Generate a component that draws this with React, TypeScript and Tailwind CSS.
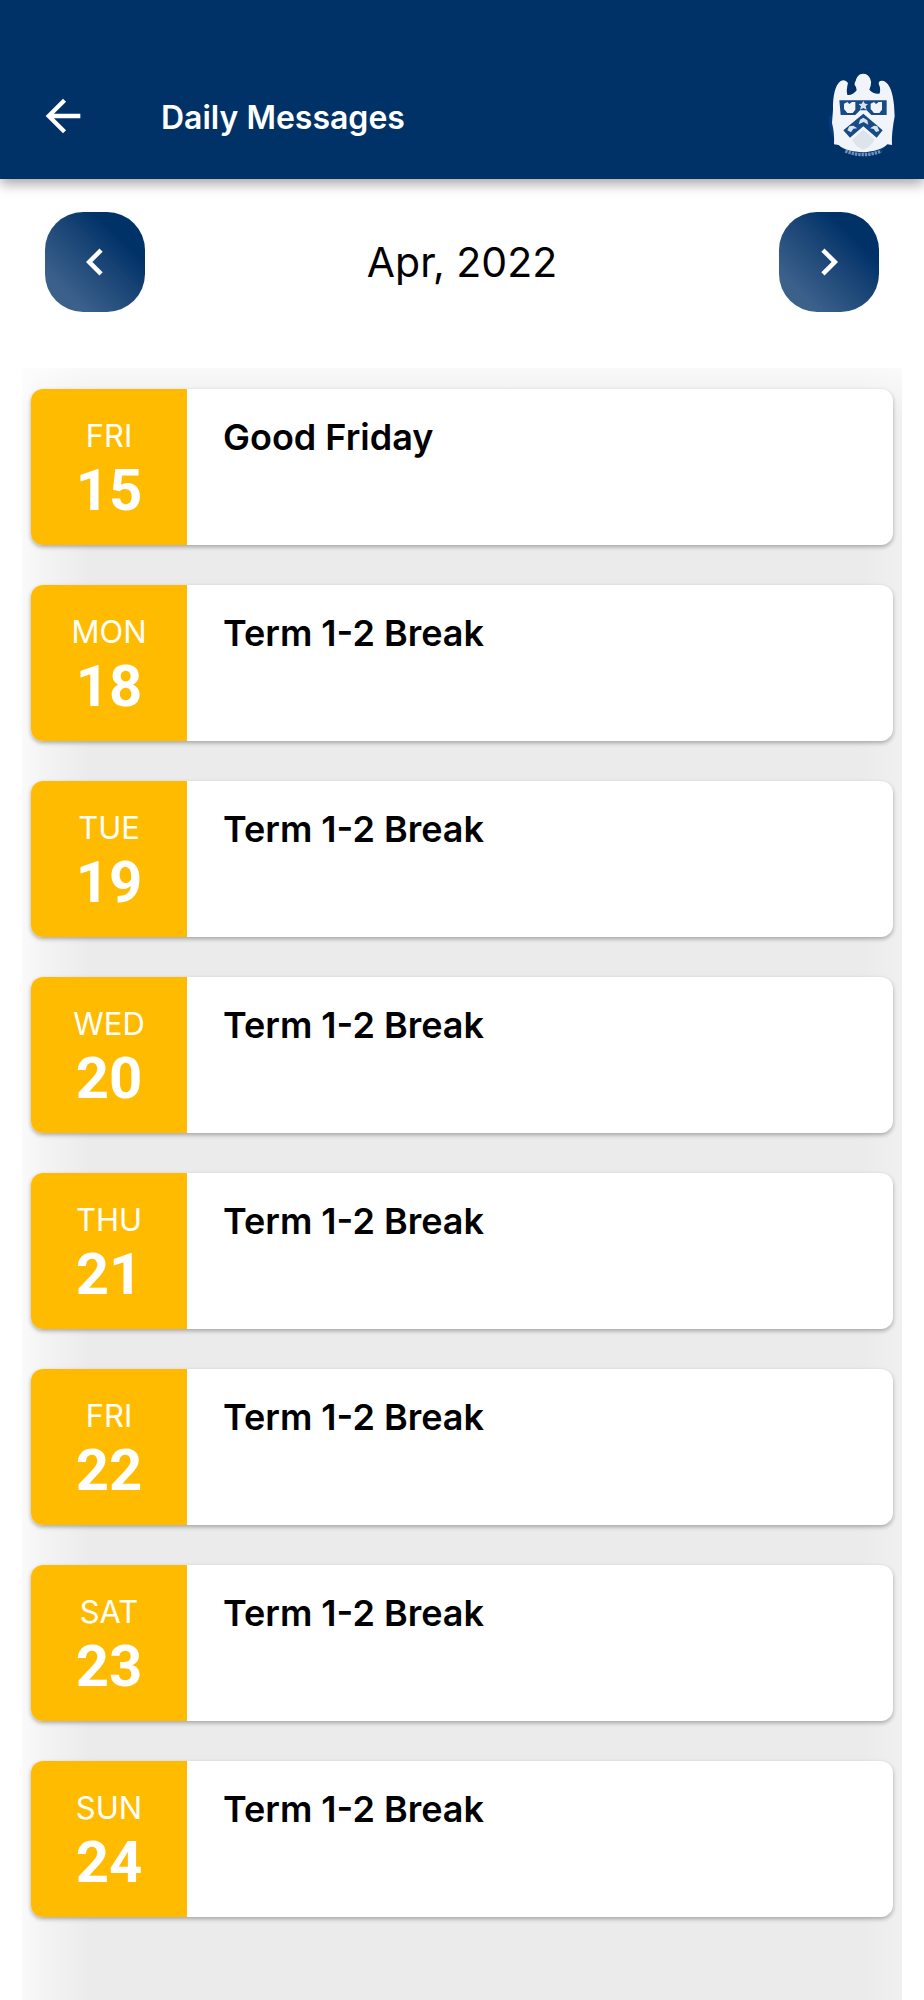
import { MdArrowBack, MdChevronLeft, MdChevronRight } from "react-icons/md";

interface Message {
  weekday: string;
  day: number;
  title: string;
}

const messages: Message[] = [
  { weekday: "FRI", day: 15, title: "Good Friday" },
  { weekday: "MON", day: 18, title: "Term 1-2 Break" },
  { weekday: "TUE", day: 19, title: "Term 1-2 Break" },
  { weekday: "WED", day: 20, title: "Term 1-2 Break" },
  { weekday: "THU", day: 21, title: "Term 1-2 Break" },
  { weekday: "FRI", day: 22, title: "Term 1-2 Break" },
  { weekday: "SAT", day: 23, title: "Term 1-2 Break" },
  { weekday: "SUN", day: 24, title: "Term 1-2 Break" },
];

const Crest = () => (
  <svg
    viewBox="0 0 204 258"
    className="h-[86px] w-[68px] shrink-0"
    role="img"
    aria-label="School crest"
  >
    {/* Motto ring */}
    <path d="M4 128 C-4 180 30 246 108 249 C176 246 206 190 196 128 Z" fill="#063b7d" />
    <path d="M52 234 Q106 256 160 234" fill="none" stroke="#6f93bd" strokeWidth="10" strokeDasharray="7 3" />
    {/* Eagle */}
    <path
      d="M106 2 C92 2 86 12 83 24 Q76 34 84 42 L86 52 Q74 68 58 66 Q54 52 60 30 Q52 18 38 24 C22 34 14 70 15 110 L12 150 Q20 180 18 214 L32 216 C46 230 74 236 106 238 C138 236 164 228 178 214 L192 216 Q190 180 200 130 L198 96 C194 58 186 34 168 24 Q152 20 152 32 Q160 50 154 62 Q136 64 124 50 L128 38 Q132 28 126 16 Q120 2 106 2 Z"
      fill="#f1f5f9"
    />
    {/* Shield */}
    <path d="M34 82 H176 V126 H130 L116 112 H96 L82 126 H38 Z" fill="#174b87" />
    <path d="M48 92 L58 87 L64 93 L72 87 H82 V110 L74 120 H58 L48 108 Z" fill="#f1f5f9" />
    <path d="M128 92 L138 87 L144 93 L152 87 H162 V110 L154 120 H138 L128 108 Z" fill="#f1f5f9" />
    <path d="M106 84 L111 92 L120 93 L113 100 L116 110 L106 105 L96 110 L99 100 L92 93 L101 92 Z" fill="#d8e2ed" />
    <path d="M106 122 L164 172 L146 194 L106 160 L66 194 L46 172 Z" fill="#174b87" />
    <path d="M92 154 L96 140 L106 134 L118 142 L121 155 L107 147 Z" fill="#d8e2ed" />
    <path d="M58 172 L64 160 L76 158 L88 166 L76 167 L69 178 Z" fill="#d8e2ed" />
    <path d="M126 166 L138 158 L148 160 L154 174 L144 177 L137 168 Z" fill="#d8e2ed" />
    <path d="M106 170 L140 200 Q128 222 106 230 Q84 222 72 200 Z" fill="#dde4eb" />
  </svg>
);

const monthButton =
  "flex size-[100px] items-center justify-center rounded-[38px] bg-linear-to-tr from-[#3b618b] from-20% to-[#003268] to-75% text-white";

const MessageCard = ({ weekday, day, title }: Message) => (
  <li className="flex h-[156px] rounded-xl bg-white shadow-[0_2px_4px_rgba(0,0,0,0.3)]">
    <div className="flex w-[156px] shrink-0 flex-col items-center rounded-l-xl bg-[#ffbb00] pt-7 text-white">
      <span className="text-[31px] leading-[38px]">{weekday}</span>
      <span className="font-[Roboto] text-[58px] leading-[70px] font-bold">{day}</span>
    </div>
    <h2 className="px-9 pt-6 text-[36px] leading-[48px] font-semibold">{title}</h2>
  </li>
);

export default function App() {
  return (
    <div className="min-h-screen bg-white font-[Inter,sans-serif] text-black">
      <header className="relative flex items-center bg-[#003268] pt-[73px] pr-7 pb-5 pl-[37px] text-white shadow-[0_5px_12px_rgba(0,0,0,0.35)]">
        <button type="button" aria-label="Back">
          <MdArrowBack className="size-[52px]" />
        </button>
        <h1 className="ml-[72px] flex-1 pt-1 text-[32px] leading-10 font-semibold">Daily Messages</h1>
        <Crest />
      </header>

      <main>
        <nav className="flex items-center justify-between px-[45px] pt-[33px] pb-14">
          <button type="button" aria-label="Previous month" className={monthButton}>
            <MdChevronLeft className="size-[54px]" />
          </button>
          <p className="text-[41px] leading-[48px]">Apr, 2022</p>
          <button type="button" aria-label="Next month" className={monthButton}>
            <MdChevronRight className="size-[54px]" />
          </button>
        </nav>

        {/* Grey backdrop, lighter along the top and both sides */}
        <ul className="mx-[22px] flex flex-col gap-10 overflow-hidden bg-[linear-gradient(to_bottom,rgba(255,255,255,0.7),rgba(255,255,255,0)_50px),linear-gradient(to_right,#fafafa,#f3f3f3_25px,#ebebeb_70px,#ebebeb_calc(100%-40px),#f0f0f0)] px-[9px] pt-[21px] pb-[83px]">
          {messages.map((message) => (
            <MessageCard key={message.day} {...message} />
          ))}
        </ul>
      </main>
    </div>
  );
}
